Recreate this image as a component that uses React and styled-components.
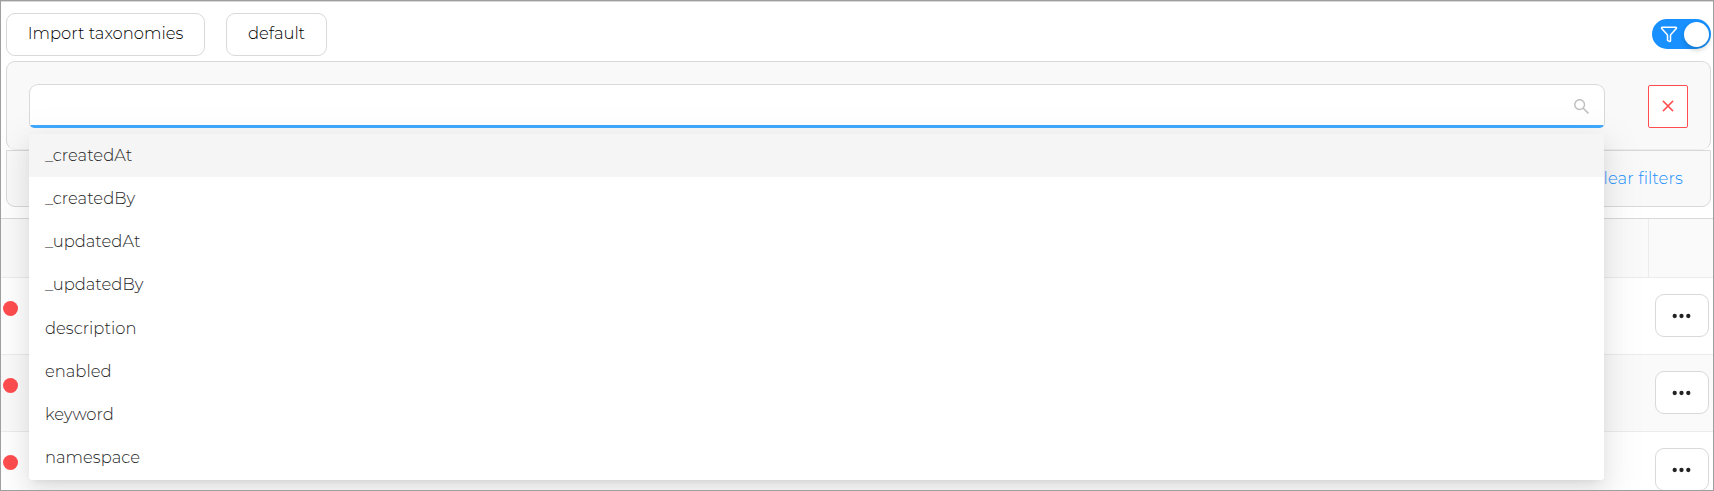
import React from "react";
import styled, { createGlobalStyle } from "styled-components";
import { Filter } from "lucide-react";
import { AiOutlineSearch, AiOutlineClose } from "react-icons/ai";

const GlobalStyle = createGlobalStyle`
  * { box-sizing: border-box; }
  body {
    margin: 0;
    background: #fff;
    font-family: Montserrat, Inter, "Liberation Sans", sans-serif;
    font-size: 16.4px;
    font-weight: 300;
    color: #000;
  }
  button { font: inherit; color: inherit; padding: 0; margin: 0; }
`;

const Frame = styled.div`
  position: relative;
  height: 491px;
  overflow: hidden;
  border: 1px solid #9f9f9f;
  box-shadow: inset 0 1px 0 #d8d8d8;
  padding-top: 12px;
`;

const Toolbar = styled.header`
  display: flex;
  align-items: center;
  gap: 21px;
  height: 43px;
  padding: 0 2px 0 5px;
`;

const Button = styled.button`
  width: ${(p) => p.$width}px;
  height: 43px;
  flex: none;
  display: flex;
  align-items: center;
  justify-content: center;
  background: #fff;
  border: 1px solid #d9d9d9;
  border-radius: 9px;
  line-height: 20px;
  padding-bottom: ${(p) => p.$lift || 0}px;
`;

const Toggle = styled.button`
  margin-left: auto;
  margin-top: -1px;
  width: 59px;
  height: 30px;
  border: 0;
  border-radius: 15px;
  background: #1890ff;
  color: #fff;
  display: flex;
  align-items: center;
  padding: 0 2px 0 8px;
  justify-content: space-between;
`;

const Knob = styled.span`
  width: 25px;
  height: 25px;
  border-radius: 50%;
  background: #fff;
  box-shadow: 0 3px 5px rgba(0, 35, 11, 0.2);
`;

const SearchPanel = styled.section`
  display: flex;
  justify-content: space-between;
  align-items: flex-start;
  height: 89px;
  margin: 5px 2px 0 5px;
  padding: 22px 22px 0 22px;
  background: #f9f9f9;
  border: 1px solid #d9d9d9;
  border-bottom-color: #ececec;
  border-radius: 9px;
`;

const SearchField = styled.div`
  width: 1576px;
  height: 44px;
  display: flex;
  align-items: center;
  justify-content: flex-end;
  padding: 0 13px 0 14px;
  background: linear-gradient(#40a9ff, #40a9ff) left bottom / 100% 3px no-repeat, #fff;
  border: 1px solid #d9d9d9;
  border-bottom: 0;
  border-radius: 9px 9px 5px 5px;
  color: #bfbfbf;
`;

const RemoveButton = styled.button`
  width: 40px;
  height: 43px;
  margin-top: 1px;
  display: flex;
  align-items: center;
  justify-content: center;
  padding-bottom: 1px;
  background: #fff;
  border: 1px solid #ff4d4f;
  border-radius: 2px;
  color: #ff4d4f;
  svg { stroke: currentColor; stroke-width: 20; }
`;

const ActionsPanel = styled.section`
  display: flex;
  justify-content: flex-end;
  align-items: center;
  height: 57px;
  margin: 0 2px 0 5px;
  padding: 0 27px 1px;
  background: #f9f9f9;
  border: 1px solid #d9d9d9;
  border-radius: 0 0 9px 9px;
`;

const ClearLink = styled.a`
  color: #1890ff;
  letter-spacing: 0.12px;
`;

const Table = styled.div`
  margin-top: 11px;
  border-top: 1px solid #d9d9d9;
`;

const HeaderRow = styled.div`
  display: flex;
  justify-content: flex-end;
  height: 59px;
  background: #fafafa;
  border-bottom: 1px solid #ececec;
`;

const HeaderCell = styled.div`
  width: 65px;
  border-left: 1px solid #ececec;
`;

const Row = styled.div`
  display: flex;
  justify-content: space-between;
  height: 77px;
  padding: 16px 4px 0 2px;
  background: ${(p) => (p.$striped ? "#fafafa" : "#fff")};
  border-bottom: 1px solid #ececec;
`;

const Status = styled.span`
  width: 15px;
  height: 15px;
  margin-top: 7px;
  border-radius: 50%;
  background: #ff4d4f;
`;

const Menu = styled.ul`
  position: absolute;
  left: 28px;
  top: 133px;
  width: 1575px;
  margin: 0;
  padding: 0;
  list-style: none;
  background: #fff;
  border-radius: 3px;
  box-shadow: 0 4px 8px -5px rgba(0, 0, 0, 0.12), 0 8px 22px rgba(0, 0, 0, 0.08),
    0 12px 38px 11px rgba(0, 0, 0, 0.05);
`;

const Option = styled.li`
  height: 43.2px;
  padding: 0 16px 1.4px;
  display: flex;
  align-items: center;
  line-height: 24px;
  color: #262626;
  background: ${(p) => (p.$active ? "#f5f5f5" : "transparent")};
`;

const fields = [
  "_createdAt",
  "_createdBy",
  "_updatedAt",
  "_updatedBy",
  "description",
  "enabled",
  "keyword",
  "namespace",
];

const Dots = () => (
  <svg width="20" height="6" viewBox="0 0 20 6" fill="#222">
    <circle cx="2.7" cy="3" r="2.15" />
    <circle cx="9.5" cy="3" r="2.15" />
    <circle cx="16.3" cy="3" r="2.15" />
  </svg>
);

export default function App() {
  return (
    <Frame>
      <GlobalStyle />
      <Toolbar>
        <Button $width={199} $lift={3}>Import taxonomies</Button>
        <Button $width={101} $lift={3}>default</Button>
        <Toggle aria-label="Filters">
          <Filter size={18} strokeWidth={2} />
          <Knob />
        </Toggle>
      </Toolbar>
      <SearchPanel>
        <SearchField>
          <AiOutlineSearch size={19} />
        </SearchField>
        <RemoveButton aria-label="Remove">
          <AiOutlineClose size={16} />
        </RemoveButton>
      </SearchPanel>
      <ActionsPanel>
        <ClearLink>Clear filters</ClearLink>
      </ActionsPanel>
      <Table>
        <HeaderRow>
          <HeaderCell />
        </HeaderRow>
        {[0, 1, 2].map((i) => (
          <Row key={i} $striped={i === 1}>
            <Status />
            <Button $width={54} aria-label="More">
              <Dots />
            </Button>
          </Row>
        ))}
      </Table>
      <Menu>
        {fields.map((name, i) => (
          <Option key={name} $active={i === 0}>
            {name}
          </Option>
        ))}
      </Menu>
    </Frame>
  );
}
